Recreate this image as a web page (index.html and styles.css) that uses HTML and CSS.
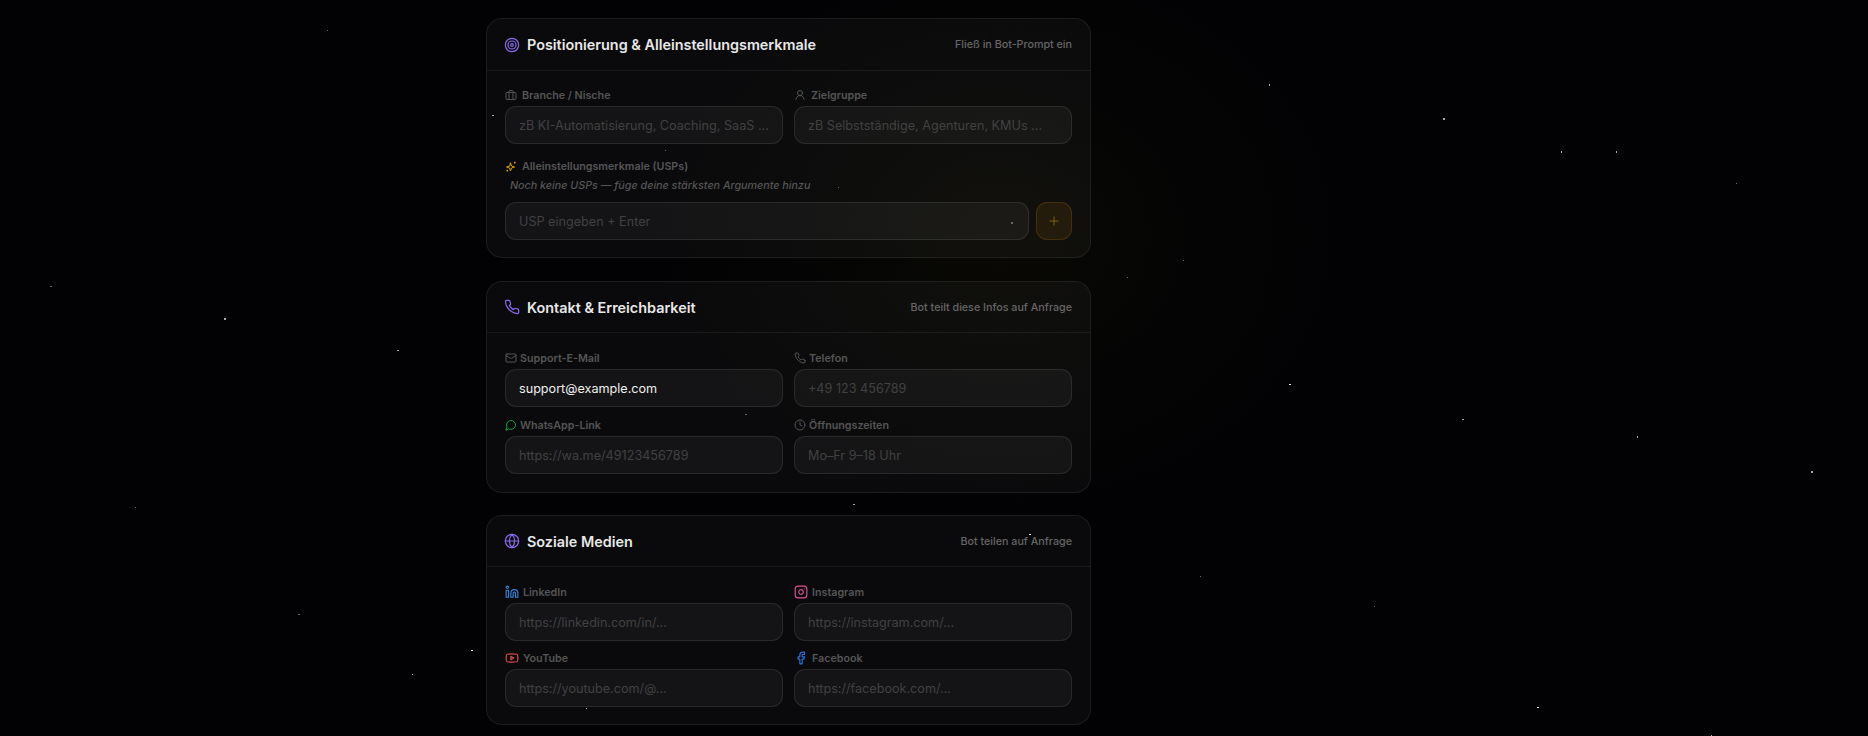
FILE: index.html
```html
<!DOCTYPE html>
<html lang="de">
<head>
<meta charset="utf-8">
<title>Bot-Einstellungen</title>
<link rel="stylesheet" href="styles.css">
</head>
<body>
<main class="stack">

<section class="card card-pos">
  <header class="card-head">
    <h2 class="card-title"><svg class="ico ico-title tint-violet" viewBox="0 0 24 24"><circle cx="12" cy="12" r="10"/><circle cx="12" cy="12" r="6"/><circle cx="12" cy="12" r="2"/></svg>Positionierung &amp; Alleinstellungsmerkmale</h2>
    <span class="card-hint">Fließ in Bot-Prompt ein</span>
  </header>
  <div class="card-body">
    <div class="grid">
      <div class="field">
        <label class="label label-wide"><svg class="ico ico-sm" viewBox="0 0 24 24"><rect x="2" y="7" width="20" height="14" rx="2"/><path d="M16 21V5a2 2 0 0 0-2-2h-4a2 2 0 0 0-2 2v16"/></svg>Branche / Nische</label>
        <input class="input" placeholder="zB KI-Automatisierung, Coaching, SaaS ...">
      </div>
      <div class="field">
        <label class="label label-wide"><svg class="ico ico-sm" viewBox="0 0 24 24"><circle cx="12" cy="8" r="5"/><path d="M20 21a8 8 0 0 0-16 0"/></svg>Zielgruppe</label>
        <input class="input" placeholder="zB Selbstständige, Agenturen, KMUs ...">
      </div>
    </div>
    <div class="usp">
      <label class="label label-wide"><svg class="ico ico-sm tint-amber" viewBox="0 0 24 24"><path d="M11 6l2 6 6 2-6 2-2 6-2-6-6-2 6-2z"/><path class="ico-dot" d="M18 5h3M3 21h3"/></svg>Alleinstellungsmerkmale (USPs)</label>
      <p class="note">Noch keine USPs — füge deine stärksten Argumente hinzu</p>
      <div class="usp-row">
        <input class="input input-grow" placeholder="USP eingeben + Enter">
        <button class="add" type="button"><svg class="ico ico-add" viewBox="0 0 24 24"><path d="M5 12h14M12 5v14"/></svg></button>
      </div>
    </div>
  </div>
</section>

<section class="card">
  <header class="card-head">
    <h2 class="card-title"><svg class="ico ico-title tint-violet" viewBox="0 0 24 24"><path d="M22 16.920v3a2 2 0 0 1-2.180 2 19.800 19.800 0 0 1-8.630-3.070 19.500 19.500 0 0 1-6-6 19.800 19.800 0 0 1-3.070-8.670A2 2 0 0 1 4.110 2h3a2 2 0 0 1 2 1.720c.13.960.36 1.900.7 2.810a2 2 0 0 1-.45 2.110L8.090 9.910a16 16 0 0 0 6 6l1.270-1.270a2 2 0 0 1 2.110-.45c.91.340 1.850.570 2.810.7A2 2 0 0 1 22 16.920z"/></svg>Kontakt &amp; Erreichbarkeit</h2>
    <span class="card-hint">Bot teilt diese Infos auf Anfrage</span>
  </header>
  <div class="card-body">
    <div class="grid">
      <div class="field">
        <label class="label"><svg class="ico ico-sm" viewBox="0 0 24 24"><rect x="2" y="4" width="20" height="16" rx="2"/><path d="M22 7l-8.970 5.700a1.900 1.900 0 0 1-2.060 0L2 7"/></svg>Support-E-Mail</label>
        <input class="input" value="support@example.com">
      </div>
      <div class="field">
        <label class="label"><svg class="ico ico-sm" viewBox="0 0 24 24"><path d="M22 16.920v3a2 2 0 0 1-2.180 2 19.800 19.800 0 0 1-8.630-3.070 19.500 19.500 0 0 1-6-6 19.800 19.800 0 0 1-3.070-8.670A2 2 0 0 1 4.110 2h3a2 2 0 0 1 2 1.720c.13.960.36 1.900.7 2.810a2 2 0 0 1-.45 2.110L8.090 9.910a16 16 0 0 0 6 6l1.270-1.270a2 2 0 0 1 2.110-.45c.91.340 1.850.570 2.810.7A2 2 0 0 1 22 16.920z"/></svg>Telefon</label>
        <input class="input" placeholder="+49 123 456789">
      </div>
      <div class="field">
        <label class="label"><svg class="ico ico-sm tint-green" viewBox="0 0 24 24"><path d="M7.900 20A9 9 0 1 0 4 16.100L2 22z"/></svg>WhatsApp-Link</label>
        <input class="input" placeholder="https://wa.me/49123456789">
      </div>
      <div class="field">
        <label class="label"><svg class="ico ico-sm" viewBox="0 0 24 24"><circle cx="12" cy="12" r="10"/><path d="M12 6v6l4 2"/></svg>Öffnungszeiten</label>
        <input class="input" placeholder="Mo–Fr 9–18 Uhr">
      </div>
    </div>
  </div>
</section>

<section class="card card-social">
  <header class="card-head">
    <h2 class="card-title"><svg class="ico ico-title tint-violet" viewBox="0 0 24 24"><circle cx="12" cy="12" r="10"/><path d="M12 2a14.500 14.500 0 0 0 0 20 14.500 14.500 0 0 0 0-20M2 12h20"/></svg>Soziale Medien</h2>
    <span class="card-hint">Bot teilen auf Anfrage</span>
  </header>
  <div class="card-body">
    <div class="grid grid-tight">
      <div class="field">
        <label class="label label-social"><svg class="ico ico-md tint-blue" viewBox="0 0 24 24"><path d="M16 8a6 6 0 0 1 6 6v7h-4v-7a2 2 0 0 0-4 0v7h-4v-7a6 6 0 0 1 6-6z"/><rect x="2" y="9" width="4" height="12"/><circle cx="4" cy="4" r="2"/></svg>LinkedIn</label>
        <input class="input" placeholder="https://linkedin.com/in/...">
      </div>
      <div class="field">
        <label class="label label-social"><svg class="ico ico-md tint-pink" viewBox="0 0 24 24"><rect x="2" y="2" width="20" height="20" rx="5"/><path d="M16 11.370A4 4 0 1 1 12.630 8 4 4 0 0 1 16 11.370z"/><path d="M17.500 6.500h.01"/></svg>Instagram</label>
        <input class="input" placeholder="https://instagram.com/...">
      </div>
      <div class="field">
        <label class="label label-social"><svg class="ico ico-md tint-red" viewBox="0 0 24 24"><path d="M2.500 17a24 24 0 0 1 0-10 2 2 0 0 1 1.400-1.400 50 50 0 0 1 16.200 0A2 2 0 0 1 21.500 7a24 24 0 0 1 0 10 2 2 0 0 1-1.400 1.400 50 50 0 0 1-16.200 0A2 2 0 0 1 2.500 17"/><path d="M10 15l5-3-5-3z"/></svg>YouTube</label>
        <input class="input" placeholder="https://youtube.com/@...">
      </div>
      <div class="field">
        <label class="label label-social"><svg class="ico ico-md tint-fb" viewBox="0 0 24 24"><path d="M18 2h-3a5 5 0 0 0-5 5v3H7v4h3v8h4v-8h3l1-4h-4V7a1 1 0 0 1 1-1h3z"/></svg>Facebook</label>
        <input class="input" placeholder="https://facebook.com/...">
      </div>
    </div>
  </div>
</section>

</main>

<svg class="stars" width="1868" height="736" viewBox="0 0 1868 736" aria-hidden="true">
  <g class="star-dim">
    <rect x="327" y="30" width="1" height="1"/><rect x="50" y="286" width="2" height="1"/><rect x="135" y="507" width="1" height="1"/>
    <rect x="1183" y="260" width="1" height="1"/><rect x="1127" y="277" width="1" height="1"/><rect x="1736" y="183" width="1" height="1"/>
    <rect x="1200" y="576" width="1" height="1"/><rect x="1374" y="606" width="1" height="1"/><rect x="298" y="614" width="2" height="1"/>
    <rect x="745" y="414" width="2" height="1"/><rect x="838" y="187" width="1" height="1"/><rect x="665" y="150" width="1" height="1"/>
    <rect x="1011" y="222" width="2" height="2"/>
  </g>
  <g class="star-mid">
    <rect x="224" y="318" width="2" height="2"/><rect x="397" y="350" width="2" height="1"/><rect x="412" y="674" width="1" height="1"/>
    <rect x="1269" y="84" width="1" height="2"/><rect x="1443" y="118" width="2" height="2"/><rect x="1561" y="151" width="1" height="2"/>
    <rect x="1616" y="151" width="1" height="2"/><rect x="1462" y="419" width="2" height="1"/><rect x="1637" y="436" width="1" height="2"/>
    <rect x="1811" y="471" width="2" height="2"/><rect x="1711" y="735" width="1" height="1"/>
    <rect x="586" y="708" width="1" height="1"/><rect x="492" y="115" width="2" height="1"/><rect x="853" y="504" width="2" height="1"/>
  </g>
  <g class="star-bright">
    <rect x="471" y="650" width="2" height="1"/><rect x="1289" y="384" width="2" height="1"/><rect x="1537" y="707" width="2" height="1"/>
    <rect x="1029" y="534" width="2" height="1"/>
  </g>
</svg>
</body>
</html>
```

FILE: styles.css
```css
* { box-sizing: border-box; }
html, body { height: 100%; }
body {
  margin: 0;
  height: 736px;
  overflow: hidden;
  background-color: #020204;
  background-image: radial-gradient(ellipse 360px 290px at 1000px 235px, rgba(190, 170, 20, 0.04), rgba(120, 130, 20, 0.016) 60%, rgba(0, 0, 0, 0) 100%);
  font-family: Inter, "Liberation Sans", sans-serif;
  color: #eee;
}
.stack {
  width: 605px;
  margin-left: 486px;
  padding-top: 18px;
  display: flex;
  flex-direction: column;
  gap: 22px;
}
.card {
  border: 1px solid rgba(255, 255, 255, 0.075);
  border-radius: 16px;
  background: rgba(255, 255, 255, 0.035);
}
.card-pos { margin-bottom: 1px; }
.card-head {
  height: 51px;
  padding: 0 18px;
  display: flex;
  align-items: center;
  justify-content: space-between;
  border-bottom: 1px solid rgba(255, 255, 255, 0.065);
}
.card-pos .card-head { height: 52px; }
.card-title {
  margin: 0;
  display: flex;
  align-items: center;
  gap: 7px;
  font-size: 14.400px;
  font-weight: 600;
  color: #e8e8e8;
}
.card-hint {
  font-size: 10.720px;
  font-weight: 500;
  color: #666;
}
.card-body { padding: 17px 18px 18px; }
.card-pos .card-body { padding: 16px 18px 17px; }
.card-social .card-body { padding: 17px 18px 17px; }
.grid {
  display: grid;
  grid-template-columns: 1fr 1fr;
  column-gap: 11px;
  row-gap: 10px;
}
.grid-tight { row-gap: 9px; }
.field { display: flex; flex-direction: column; }
.label {
  height: 15px;
  padding-top: 1px;
  margin-bottom: 4px;
  display: flex;
  align-items: center;
  gap: 3px;
  font-size: 10.720px;
  font-weight: 600;
  color: #555;
}
.label-wide { gap: 5px; }
.label-social { gap: 4px; }
.input {
  width: 100%;
  height: 38px;
  padding: 0 13px;
  border: 1px solid rgba(255, 255, 255, 0.09);
  border-radius: 11px;
  outline: none;
  background: rgba(255, 255, 255, 0.045);
  font-family: inherit;
  font-size: 12.640px;
  color: #f0f0f0;
}
.input::placeholder { color: #414141; opacity: 1; }
.input-grow { flex: 1; width: auto; min-width: 0; }
.usp { margin-top: 14px; }
.usp .label { margin-bottom: 0; }
.note {
  margin: 5px 0 8px 5px;
  font-size: 10.720px;
  line-height: 16px;
  font-style: italic;
  font-weight: 500;
  color: #555;
}
.usp-row { display: flex; gap: 7px; }
.add {
  flex: none;
  width: 36px;
  height: 38px;
  padding: 0;
  display: flex;
  align-items: center;
  justify-content: center;
  border: 1px solid rgba(245, 158, 11, 0.15);
  border-radius: 11px;
  background: rgba(245, 158, 11, 0.09);
}
.ico {
  flex: none;
  fill: none;
  stroke: #555;
  stroke-width: 2;
  stroke-linecap: round;
  stroke-linejoin: round;
}
.ico-title { width: 16px; height: 16px; margin-left: -1px; stroke-width: 1.800; }
.ico-sm { width: 12px; height: 12px; }
.ico-md { width: 14px; height: 14px; }
.ico-add { width: 14px; height: 14px; stroke: #8a6a14; stroke-width: 1.500; }
.ico-dot { stroke-width: 3.500; stroke-linecap: butt; }
.tint-violet { stroke: #8b6cf0; }
.tint-amber { stroke: #d9a106; }
.tint-green { stroke: #16a34a; }
.tint-blue { stroke: #3b82d6; }
.tint-pink { stroke: #db4f95; }
.tint-red { stroke: #dc4a4a; }
.tint-fb { stroke: #2f6fdc; }
.stars {
  position: fixed;
  left: 0;
  top: 0;
  pointer-events: none;
}
.star-dim { fill: #666; }
.star-mid { fill: #aaa; }
.star-bright { fill: #e8e8e8; }
```
